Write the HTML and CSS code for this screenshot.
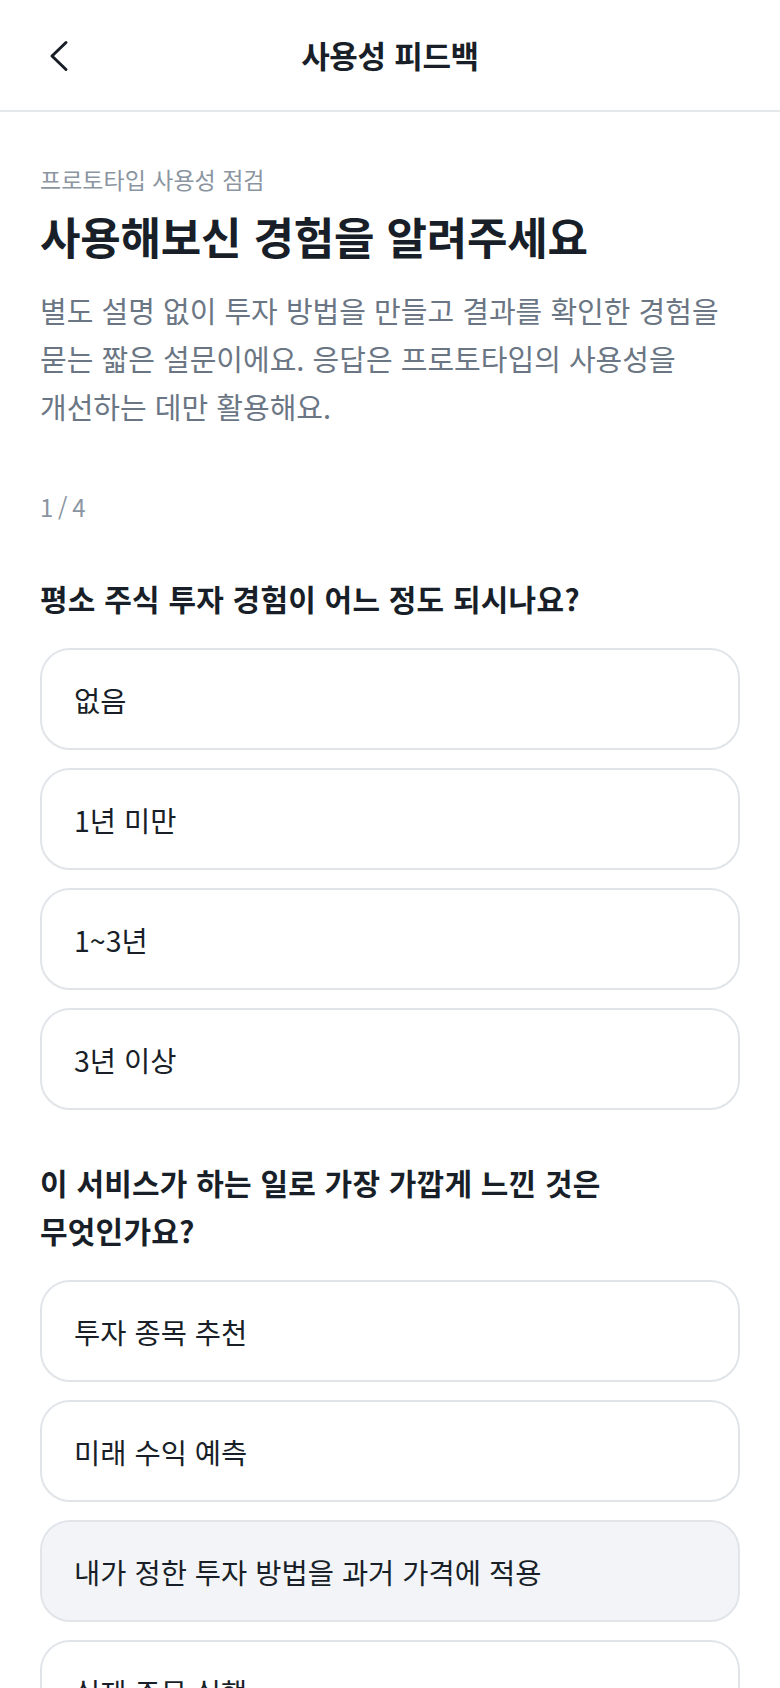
FILE: index.html
```html
<!DOCTYPE html>
<html lang="ko">
<head>
<meta charset="utf-8">
<title>사용성 피드백</title>
<link rel="stylesheet" href="styles.css">
</head>
<body>
<header class="topbar">
  <button class="back" aria-label="뒤로">
    <svg width="24" height="32" viewBox="0 0 24 32" fill="none" stroke="#191f28" stroke-width="3" stroke-linecap="round" stroke-linejoin="round"><polyline points="17,2.5 3,16 17,29.5"/></svg>
  </button>
  <h1 class="topbar-title">사용성 피드백</h1>
</header>
<main class="content">
  <p class="eyebrow">프로토타입 사용성 점검</p>
  <h2 class="headline">사용해보신 경험을 알려주세요</h2>
  <p class="lead">별도 설명 없이 투자 방법을 만들고 결과를 확인한 경험을 묻는 짧은 설문이에요. 응답은 프로토타입의 사용성을 개선하는 데만 활용해요.</p>
  <p class="step">1 / 4</p>

  <section class="question">
    <h3 class="q-title">평소 주식 투자 경험이 어느 정도 되시나요?</h3>
    <div class="options">
      <div class="option">없음</div>
      <div class="option">1년 미만</div>
      <div class="option">1~3년</div>
      <div class="option">3년 이상</div>
    </div>
  </section>

  <section class="question">
    <h3 class="q-title">이 서비스가 하는 일로 가장 가깝게 느낀 것은 무엇인가요?</h3>
    <div class="options">
      <div class="option">투자 종목 추천</div>
      <div class="option">미래 수익 예측</div>
      <div class="option option-selected">내가 정한 투자 방법을 과거 가격에 적용</div>
      <div class="option">실제 주문 실행</div>
    </div>
  </section>
</main>
</body>
</html>
```
FILE: styles.css
```css
* { box-sizing: border-box; }
html, body { margin: 0; padding: 0; background: #ffffff; }
body {
  font-family: "Noto Sans CJK KR", "Noto Sans", sans-serif;
  color: #191f28;
  word-break: keep-all;
}
.topbar {
  height: 112px;
  border-bottom: 2px solid #e5e8eb;
  display: flex;
  align-items: center;
  justify-content: center;
  position: relative;
}
.back {
  position: absolute;
  left: 49px;
  top: 40px;
  width: 24px;
  height: 32px;
  padding: 0;
  border: 0;
  background: none;
  display: flex;
}
.topbar-title {
  margin: 0;
  font-size: 31px;
  font-weight: 700;
  letter-spacing: -0.3px;
  line-height: 40px;
}
.content {
  padding: 50px 40px 40px;
}
.eyebrow {
  margin: 0;
  font-size: 23px;
  line-height: 34px;
  color: #8b95a1;
}
.headline {
  margin: 10px 0 0;
  font-size: 44px;
  line-height: 60px;
  font-weight: 700;
  letter-spacing: -0.2px;
}
.lead {
  margin: 20px 0 0;
  font-size: 29px;
  line-height: 48px;
  letter-spacing: 0;
  color: #6b7684;
}
.step {
  margin: 61px 0 0;
  font-size: 24px;
  line-height: 32px;
  word-spacing: -2px;
  color: #8b95a1;
}
.question { margin-top: 51px; }
.question + .question { margin-top: 48px; }
.q-title {
  margin: 0;
  font-size: 30px;
  line-height: 48px;
  font-weight: 700;
  letter-spacing: 0.2px;
}
.options {
  margin-top: 26px;
  display: flex;
  flex-direction: column;
  gap: 18px;
}
.option {
  height: 102px;
  border: 2px solid #e1e5ea;
  border-radius: 30px;
  padding: 0 32px;
  display: flex;
  align-items: center;
  font-size: 28.5px;
  letter-spacing: 0;
  color: #191f28;
  background: #ffffff;
}
.option-selected { background: #f2f4f7; }
```
